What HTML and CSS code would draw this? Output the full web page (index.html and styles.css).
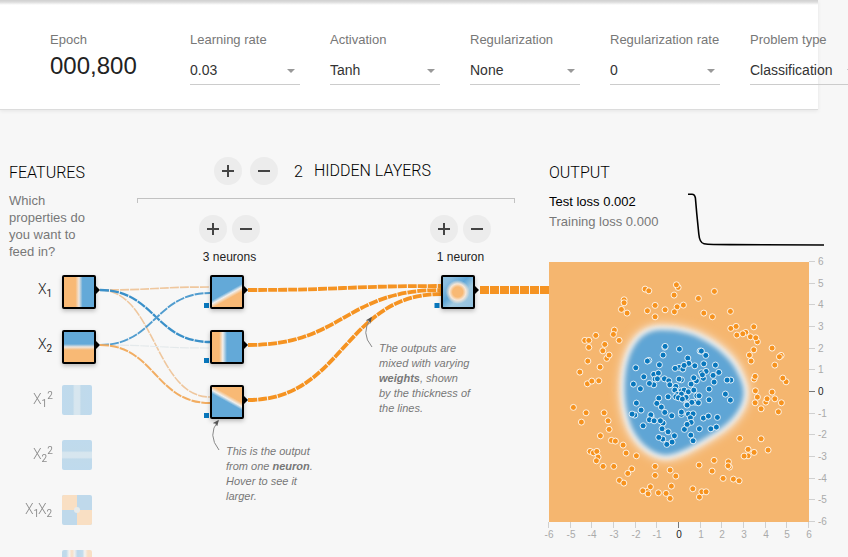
FILE: index.html
```html
<!DOCTYPE html>
<html lang="en">
<head>
<meta charset="utf-8">
<title>Neural network playground</title>
<link rel="stylesheet" href="styles.css">
</head>
<body>
<header class="controls">
  <div class="control"><span class="label">Epoch</span><span class="epoch">000,800</span></div>
  <div class="control"><span class="label">Learning rate</span><div class="select">0.03</div></div>
  <div class="control"><span class="label">Activation</span><div class="select">Tanh</div></div>
  <div class="control"><span class="label">Regularization</span><div class="select">None</div></div>
  <div class="control"><span class="label">Regularization rate</span><div class="select">0</div></div>
  <div class="control"><span class="label">Problem type</span><div class="select">Classification</div></div>
</header>
<main class="main">
  <section class="features">
    <h2>FEATURES</h2>
    <p>Which properties do you want to feed in?</p>
  </section>
  <section class="hidden">
    <div class="layer-head">
      <button class="round plus"></button><button class="round"></button>
      <span class="count">2</span><h2>HIDDEN LAYERS</h2>
    </div>
    <div class="bracket"></div>
    <div class="layers">
      <div class="layer"><div class="buttons"><button class="round plus"></button><button class="round"></button></div><span>3 neurons</span></div>
      <div class="layer"><div class="buttons"><button class="round plus"></button><button class="round"></button></div><span>1 neuron</span></div>
    </div>
  </section>
  <section class="output">
    <div class="metrics">
      <div>
        <h2>OUTPUT</h2>
        <div class="loss test">Test loss 0.002</div>
        <div class="loss train">Training loss 0.000</div>
      </div>
      <svg class="chart" width="140" height="60" viewBox="686 190 140 60"><path d="M688 194.300H692Q694.700 194.300 695.400 198L696.800 214L698.800 234Q699.600 243 704 243.700Q710 244.600 730 244.600L824 245"/></svg>
    </div>
    <svg class="plot" width="299" height="295" viewBox="0 0 299 295">
      <defs>
        <clipPath id="field"><rect width="260" height="260"/></clipPath>
        <filter id="glow" x="-30%" y="-30%" width="160%" height="160%"><feGaussianBlur stdDeviation="5"/></filter>
        <filter id="soft" x="-30%" y="-30%" width="160%" height="160%"><feGaussianBlur stdDeviation="2.4"/></filter>
        <path id="blob" d="M112 68C129 68 143 71 158 80C173 89 184 100 189 112C195 124 197 133 191 145C186 155 177 164 163 172C146 182 133 191 118 193C104 193 90 181 83 166C76 150 74 127 77 108C81 85 92 68 112 68Z"/>
      </defs>
      <g clip-path="url(#field)">
        <rect width="260" height="260" fill="#f5b66f"/>
        <use href="#blob" class="halo" filter="url(#glow)"/>
        <use href="#blob" class="rim" filter="url(#soft)"/>
        <use href="#blob" class="core" filter="url(#soft)"/>
      </g>
      <g id="points"></g>
      <g id="axes"></g>
    </svg>
  </section>

  <svg class="network" width="549" height="297" viewBox="0 260 549 297">
    <defs>
      <linearGradient id="gx"><stop offset=".38" stop-color="#f8b975"/><stop offset=".5" stop-color="#efe6de"/><stop offset=".62" stop-color="#63a9d8"/></linearGradient>
      <linearGradient id="gy" x2="0" y2="1"><stop offset=".4" stop-color="#63a9d8"/><stop offset=".5" stop-color="#efe6de"/><stop offset=".6" stop-color="#f8b975"/></linearGradient>
      <linearGradient id="n1" x1=".25" y1=".05" x2=".75" y2=".95"><stop offset=".5" stop-color="#63a9d8"/><stop offset=".6" stop-color="#f0efed"/><stop offset=".72" stop-color="#f8b975"/></linearGradient>
      <linearGradient id="n2"><stop offset=".24" stop-color="#f8b975"/><stop offset=".36" stop-color="#f0efed"/><stop offset=".5" stop-color="#63a9d8"/></linearGradient>
      <linearGradient id="n3" x1=".75" y1=".05" x2=".25" y2=".95"><stop offset=".28" stop-color="#f8b975"/><stop offset=".4" stop-color="#f0efed"/><stop offset=".5" stop-color="#63a9d8"/></linearGradient>
      <radialGradient id="no"><stop offset=".42" stop-color="#f8b975"/><stop offset=".68" stop-color="#f5e6d7"/><stop offset="1" stop-color="#f5e6d7" stop-opacity="0"/></radialGradient>
      <linearGradient id="nb" y2="1"><stop offset="0" stop-color="#91c1df"/><stop offset=".15" stop-color="#8bbde0"/><stop offset=".42" stop-color="#5ea6d7"/><stop offset=".62" stop-color="#a2cae1"/><stop offset="1" stop-color="#91c1df"/></linearGradient>
      <linearGradient id="sq"><stop offset="0" stop-color="#bfdaed"/><stop offset=".36" stop-color="#c0daeb"/><stop offset=".42" stop-color="#d7e6ef"/><stop offset=".58" stop-color="#d7e6ef"/><stop offset=".64" stop-color="#c0daeb"/><stop offset="1" stop-color="#bfdaed"/></linearGradient>
      <linearGradient id="sqy" href="#sq" x2="0" y2="1"/>
      <linearGradient id="sin"><stop offset="0" stop-color="#c0daeb"/><stop offset=".14" stop-color="#c0daeb"/><stop offset=".24" stop-color="#f5f3f0"/><stop offset=".33" stop-color="#f8dfc4"/><stop offset=".42" stop-color="#f0efed"/><stop offset=".52" stop-color="#bcd8ec"/><stop offset=".68" stop-color="#c3dcec"/><stop offset=".76" stop-color="#f5f3f0"/><stop offset=".86" stop-color="#f8dfc4"/><stop offset="1" stop-color="#f8dfc4"/></linearGradient>
      <filter id="shadow" x="-30%" y="-30%" width="170%" height="170%"><feDropShadow dx="0" dy="2" stdDeviation="2" flood-opacity=".25"/></filter>
      <filter id="tiny"><feGaussianBlur stdDeviation=".7"/></filter>
      <marker id="arrow" markerWidth="7" markerHeight="6" refX="5" refY="3" orient="auto" markerUnits="userSpaceOnUse"><path d="M0 .2L6.5 3L0 5.8L1.5 3Z" class="tip"/></marker>
    </defs>
    <g class="links">
      <path d="M100 290C155 290 155 287 210 287" stroke="#efc79e" stroke-width="1.7"/>
      <path d="M100 290C155 290 155 397 210 397" stroke="#efc79e" stroke-width="1.6"/>
      <path d="M100 345C155 345 155 348 210 348" stroke="#e4e9eb" stroke-width="1.2"/>
      <path d="M100 290C155 290 155 342 210 342" stroke="#3a90c9" stroke-width="2.3"/>
      <path d="M100 345C155 345 155 293 210 293" stroke="#529dcf" stroke-width="1.9"/>
      <path d="M100 345C155 345 155 403 210 403" stroke="#f2ad62" stroke-width="2"/>
      <path d="M248 290C344 290 344 286 441 286" class="heavy"/>
      <path d="M248 345C344 345 344 290 441 290" class="heavy"/>
      <path d="M248 400C344 400 344 294 441 294" class="heavy"/>
      <path d="M480 290H549" class="final"/>
    </g>
    <g fill="#0877bd"><path d="M204 303h5v5h-5zM204 358h5v5h-5zM204 413h5v5h-5zM434.500 303h5v5h-5z"/></g>
    <g filter="url(#shadow)">
      <rect x="62" y="275" width="34" height="34" rx="2"/><rect x="62" y="330" width="34" height="34" rx="2"/>
      <rect x="210" y="275" width="34" height="34" rx="2"/><rect x="210" y="330" width="34" height="34" rx="2"/><rect x="210" y="385" width="34" height="34" rx="2"/>
      <rect x="441" y="275" width="34" height="34" rx="2"/>
    </g>
    <path d="M96 286l4 4-4 4zM96 341l4 4-4 4zM244 286l4 4-4 4zM244 341l4 4-4 4zM244 396l4 4-4 4zM475 286l4 4-4 4z"/>
    <rect x="64" y="277" width="30" height="30" fill="url(#gx)"/>
    <rect x="64" y="332" width="30" height="30" fill="url(#gy)"/>
    <rect x="212" y="277" width="30" height="30" fill="url(#n1)"/>
    <rect x="212" y="332" width="30" height="30" fill="url(#n2)"/>
    <rect x="212" y="387" width="30" height="30" fill="url(#n3)"/>
    <rect x="443" y="277" width="30" height="30" fill="url(#nb)"/>
    <circle cx="457.700" cy="292" r="12" fill="url(#no)"/>
    <rect x="62" y="385" width="30" height="30" rx="2" fill="url(#sq)"/>
    <rect x="62" y="440" width="30" height="30" rx="2" fill="url(#sqy)"/>
    <g><rect x="62" y="495" width="30" height="30" rx="2" fill="#bfd9eb"/><path d="M64 495H77V510H92V523Q92 525 90 525H77V510H62V497Q62 495 64 495Z" fill="#f9dfc3"/><circle cx="77" cy="510" r="3" fill="#e8ebea" filter="url(#tiny)"/></g>
    <rect x="62" y="550" width="30" height="30" rx="2" fill="url(#sin)"/>
    <g class="names">
      <text x="38" y="293.500">X<tspan class="sub" dy="3">1</tspan></text>
      <text x="38" y="348.500">X<tspan class="sub" dy="3">2</tspan></text>
      <g opacity=".5">
        <text x="33" y="403.500">X<tspan class="sub" dy="3">1</tspan><tspan class="sub" dy="-8">2</tspan></text>
        <text x="33" y="458.500">X<tspan class="sub" dy="3">2</tspan><tspan class="sub" dy="-8">2</tspan></text>
        <text x="25" y="513.500">X<tspan class="sub" dy="3">1</tspan><tspan x="38" dy="-3">X</tspan><tspan class="sub" dy="3">2</tspan></text>
      </g>
    </g>
    <g class="callout">
      <path d="M219 450Q207 435 218 421" marker-end="url(#arrow)"/>
      <path d="M372 347Q360 333 371 318" marker-end="url(#arrow)"/>
      <text><tspan x="226" y="455">This is the output</tspan><tspan x="226" y="470">from one </tspan><tspan class="b">neuron</tspan>.<tspan x="226" y="485">Hover to see it</tspan><tspan x="226" y="500">larger.</tspan></text>
      <text><tspan x="379" y="352">The outputs are</tspan><tspan x="379" y="367">mixed with varying</tspan><tspan class="b" x="379" y="382">weights</tspan>, shown<tspan x="379" y="397">by the thickness of</tspan><tspan x="379" y="412">the lines.</tspan></text>
    </g>
  </svg>
</main>
<script src="plot.js"></script>
</body>
</html>
```
FILE: styles.css
```css
* { box-sizing: border-box; }
body {
  margin: 0;
  width: 848px;
  height: 557px;
  overflow: hidden;
  background: #f7f7f7;
  color: #222;
  font: 13px "Liberation Sans", Arial, sans-serif;
}
h2 { margin: 0; font: 300 16px/20px Roboto, sans-serif; color: #000; white-space: nowrap; }
.controls {
  display: flex;
  gap: 30px;
  width: 818px;
  height: 110px;
  padding: 32px 0 0 50px;
  background: linear-gradient(#d0d0d0, #dcdcdc 2px, #fff 5px);
  border-bottom: 1px solid #dcdcdc;
  box-shadow: 0 1px 4px rgba(0, 0, 0, .08);
}
.control { flex: 0 0 110px; display: flex; flex-direction: column; white-space: nowrap; }
.label { line-height: 16px; color: #777; }
.epoch { margin-top: 2px; font-size: 24px; line-height: 32px; color: #222; }
.select {
  display: flex;
  justify-content: space-between;
  align-items: center;
  height: 29px;
  margin-top: 8px;
  padding-right: 5px;
  border-bottom: 1px solid #ccc;
  font-size: 14px;
  color: #333;
}
.select::after { content: ""; margin-top: 1px; border: 4px solid transparent; border-top-color: #999; border-bottom: 0; }
.main { position: relative; display: flex; height: 447px; padding-left: 9px; }
.features { width: 128px; padding-top: 53px; }
.features p { width: 85px; margin: 9px 0 0; line-height: 17px; color: #777; }
.hidden { width: 378px; padding-top: 46px; }
.layer-head { display: flex; align-items: center; height: 30px; padding-left: 77px; }
.layer-head .round + .round { margin-left: 8px; }
.layer-head .count { margin: 0 11px 0 16px; font: 300 16px Roboto, sans-serif; color: #000; }
.round { position: relative; width: 28px; height: 28px; border: 0; border-radius: 50%; background: #ececec; padding: 0; }
.round::before, .plus::after { content: ""; position: absolute; left: 8px; top: 13px; width: 12px; height: 2px; background: #444; }
.plus::after { transform: rotate(90deg); }
.bracket { height: 5px; margin-top: 12px; border: 1px solid #c2c2c2; border-bottom: 0; }
.layers { display: flex; justify-content: space-between; padding: 12px 24px 0 62px; }
.layer { width: 61px; display: flex; flex-direction: column; align-items: center; white-space: nowrap; }
.layer span { margin-top: 6px; line-height: 16px; font-size: 12px; }
.buttons { display: flex; gap: 5px; }
.output { width: 299px; margin-left: 34px; }
.metrics { display: flex; justify-content: space-between; height: 152px; padding: 53px 22px 0 0; white-space: nowrap; }
.loss { line-height: 20px; }
.test { margin-top: 9px; color: #000; }
.train { color: #777; }
.chart { margin-top: 27px; flex: none; }
.chart path { fill: none; stroke: #000; stroke-width: 1.6; }
.plot { display: block; overflow: visible; }
.halo { fill: none; stroke: #f4e0ca; stroke-width: 12; }
.rim { fill: none; stroke: #f2f2f1; stroke-width: 8; }
.core { fill: #5fa5d5; }
.point { stroke: #fff; stroke-opacity: .85; stroke-width: 1; }
.orange { fill: #f7931e; }
.blue { fill: #0877bd; }
.tick { stroke: #d0d0d0; }
.tick.zero { stroke: #777; }
.tick-label { font-size: 10px; fill: #aaa; }
.tick-label.zero { fill: #222; }
.network { position: absolute; left: 0; top: 150px; }
.links path { fill: none; stroke-dasharray: 9 1; }
.links .heavy { stroke: #f59322; stroke-width: 3.8; }
.links .final { stroke: #f59322; stroke-width: 8; }
.names text { font: 300 14px Roboto, sans-serif; fill: #222; }
.names .sub { font-size: 10px; font-weight: 400; }
.callout path { fill: none; stroke: #888; }
.callout text { font-size: 11px; font-style: italic; fill: #777; }
.callout .b { font-weight: 700; }
marker .tip { fill: #555; stroke: none; }
```
FILE: plot.js
```js
const NS = "http://www.w3.org/2000/svg";
function add(parent, tag, attrs, text) {
  const el = document.createElementNS(NS, tag);
  for (const k in attrs) el.setAttribute(k, attrs[k]);
  if (text !== undefined) el.textContent = text;
  parent.appendChild(el);
}

// Samples by quadrant: offset of the quadrant, then x,y pairs in thirds of a pixel.
const samples = [
  ["orange", -9, -7, "315,102 326,107 414,97 409,89 402,120 475,130 252,134 252,143 244,163 261,174 345,151 322,167 345,185 375,164 411,155 403,170 430,150 223,225 220,238 237,256 167,241 134,256 146,256 146,277 194,268 188,287 200,310 207,300 143,318 180,336 119,351 142,386 155,378 176,377"],
  ["orange", 131, -7, "103,109 71,174 97,185 151,169 152,220 168,214 221,215 170,240 197,232 188,236 211,245 232,260 227,248 221,284 208,300 213,318 276,279 303,301 298,305 284,330 222,372 225,364 318,380 308,369 226,407 232,426 276,411 257,441 261,431 284,431 304,443 225,443"],
  ["orange", -9, 133, "100,37 138,53 124,81 192,53 204,77 207,103 181,122 214,136 226,138 249,150 150,169 160,173 170,169 174,186 169,197 189,214 221,214 258,174 289,182 275,221 263,235 238,256 251,264 345,214 345,241 390,225 407,243 322,288 331,275 308,287 324,296 355,293 378,295 394,273 390,310 458,281 477,210 478,306"],
  ["orange", 131, 133, "295,50 243,41 179,130 243,131 204,163 222,172 264,165 204,182 192,183 102,196 145,200 148,216 144,212 96,228 129,250 160,252 177,257 65,290 78,290"],
  ["blue", -9, -7, "374,276 375,274 418,282 369,300 326,316 322,318 358,329 287,338 443,309 446,325 464,332 417,337 428,342 432,331 405,340 480,288 341,358 355,354 311,365 345,372 352,371 373,371 386,377 389,389 280,387 341,389 328,385 301,401 424,374 417,372 469,377 461,368 453,387 407,394 404,405 424,407 432,405 445,410 461,405 412,418 424,417 407,425 415,428 438,427 427,432 384,425 356,429 350,445 289,444 470,422 477,422 440,448 465,441 475,443 455,442"],
  ["blue", 131, -7, "64,288 77,301 71,326 106,330 116,352 99,361 78,349 70,370 64,353 67,359 102,381 152,375 141,375 87,402 87,434 136,417 151,435"],
  ["blue", -9, 133, "364,36 303,45 374,52 333,63 332,59 284,60 276,57 395,62 424,58 424,51 445,57 459,56 451,68 328,74 342,77 369,84 361,77 309,92 366,101 384,110 433,103 453,82 441,88 478,101 452,120 403,122 368,132 356,127 396,141 380,148 459,137 441,30"],
  ["blue", 131, 133, "70,69 85,63 112,67 92,101 109,96"]
];
const points = document.getElementById("points");
for (const [kind, dx, dy, list] of samples)
  for (const pair of list.split(" ")) {
    const [x, y] = pair.split(",").map(Number);
    add(points, "circle", { class: "point " + kind, cx: (x / 3 + dx + .1).toFixed(1), cy: (y / 3 + dy + .1).toFixed(1), r: 3 });
  }

const axes = document.getElementById("axes");
for (let v = -6; v <= 6; v++) {
  const x = Math.round((v + 6) * 21.667) - .5, y = Math.round((6 - v) * 21.667) - .5;
  const zero = v === 0 ? " zero" : "";
  add(axes, "path", { class: "tick" + zero, d: `M${x} 260v6` });
  add(axes, "path", { class: "tick" + zero, d: `M260 ${y}h6` });
  add(axes, "text", { class: "tick-label" + zero, x: x + .5, y: 276, "text-anchor": "middle" }, v);
  add(axes, "text", { class: "tick-label" + zero, x: 269, y: y + 3.5 }, v);
}
```
